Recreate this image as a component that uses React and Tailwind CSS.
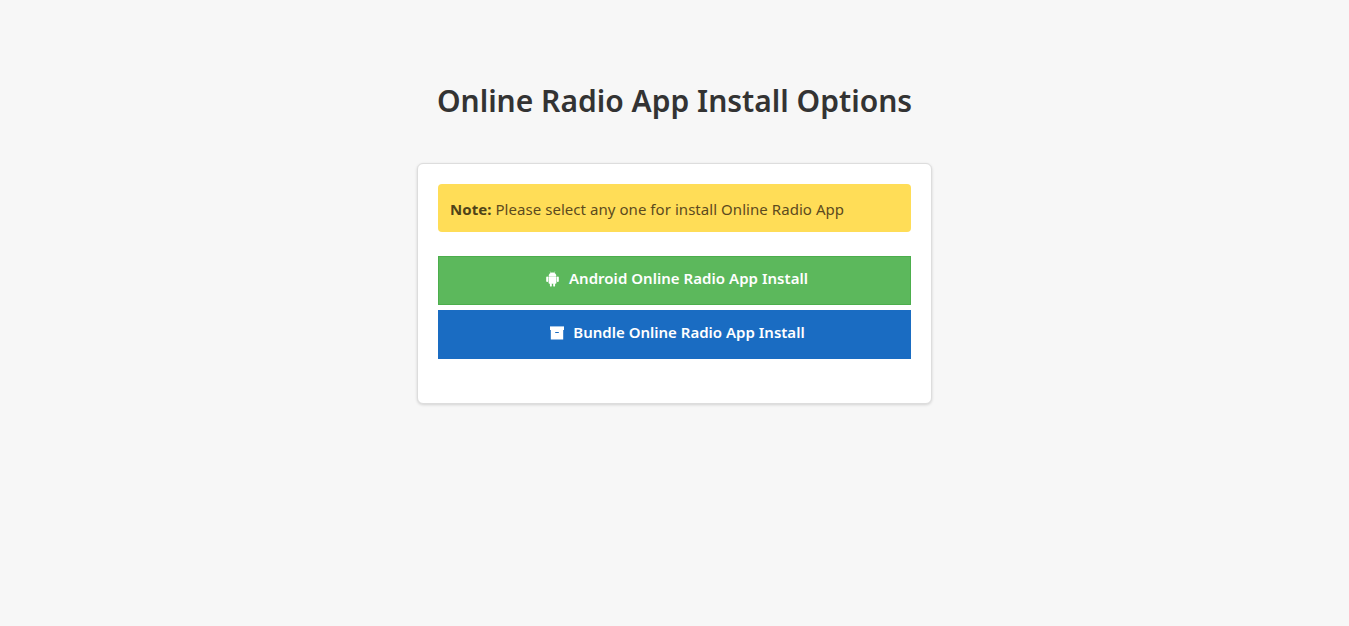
const font = "font-['Noto_Sans','Open_Sans',sans-serif]";

function AndroidIcon() {
    return (
        <svg viewBox="0 0 13 16" className="h-[16px] w-[13px] fill-white">
            <path d="M2.6 5.6C2.6 3.2 4.3 1.6 6.5 1.6s3.9 1.6 3.9 4z" />
            <path d="M4.2.6l1 1.6M8.8.6l-1 1.6" stroke="#fff" strokeWidth="0.6" />
            <rect x="2.6" y="5.4" width="7.8" height="7.4" rx="0.8" />
            <rect x="0.2" y="5.6" width="2" height="5.4" rx="1" />
            <rect x="10.8" y="5.6" width="2" height="5.4" rx="1" />
            <rect x="3.9" y="12" width="1.9" height="3.6" rx="0.9" />
            <rect x="7.2" y="12" width="1.9" height="3.6" rx="0.9" />
        </svg>
    );
}

function ArchiveIcon() {
    return (
        <svg viewBox="0 0 14 14" className="h-[14px] w-[14px] fill-white">
            <path d="M0 0.4h14v3.6H0z" />
            <path fillRule="evenodd" d="M0.8 4h12.4v9.6H0.8zM5.2 6v1h3.6V6z" />
        </svg>
    );
}

export default function App() {
    return (
        <div className={`min-h-[626px] bg-[#f7f7f7] pt-[80px] text-[#333] ${font}`}>
            <h1 className="text-center text-[30px] font-semibold leading-[41px] text-[#333]">
                Online Radio App Install Options
            </h1>

            <div className="mx-auto mt-[42px] w-[515px] rounded-md border border-[#ddd] bg-white px-5 pt-5 pb-[44px] shadow-[0_1px_3px_rgba(0,0,0,0.15)]">
                {/* Note */}
                <div className="rounded bg-[#ffdd57] px-3 pt-[13px] pb-[11px] text-[15px] leading-6 tracking-[0.05px] text-[#5c4a1e]">
                    <strong className="font-bold text-[#4f4318]">Note:</strong> Please select any one for install Online Radio App
                </div>

                <div className="mt-6 flex flex-col gap-[5px]">
                    <a className="flex h-[49px] items-center justify-center gap-[10px] border border-[#4cae4c] bg-[#5cb85c] pb-[4px] pl-[5px] text-[15px] font-semibold tracking-[0.035px] text-white">
                        <AndroidIcon />
                        Android Online Radio App Install
                    </a>
                    <a className="flex h-[49px] items-center justify-center gap-[9px] bg-[#1a6cc2] pb-[4px] pl-[6px] text-[15px] font-semibold text-white">
                        <ArchiveIcon />
                        Bundle Online Radio App Install
                    </a>
                </div>
            </div>
        </div>
    );
}
